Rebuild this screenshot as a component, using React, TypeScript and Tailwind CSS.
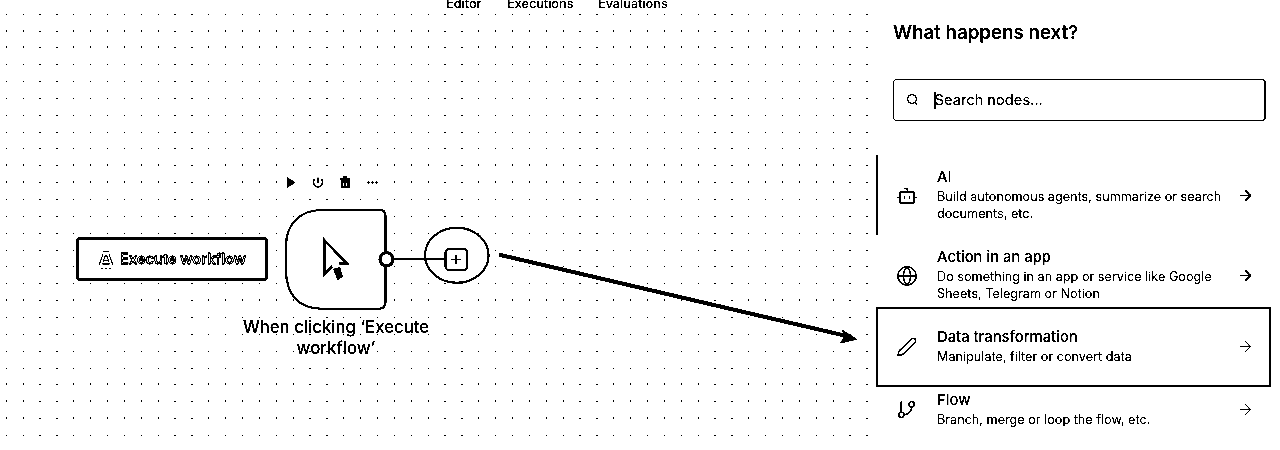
import { ArrowRight, GitBranch, Globe } from 'lucide-react';
import type { ReactNode } from 'react';

const TALL_ROWS = [1, 2, 9, 10, 17, 22, 23, 24];

function DotGrid() {
  const dots: ReactNode[] = [];
  for (let r = 0; r < 26; r++) {
    for (let c = 0; c < 52; c++) {
      const x = 6.4 + 16.875 * c;
      const y = Math.floor(14.15 + 16.85 * r);
      if (y === 182 && x > 282 && x < 382) continue;
      const wide = x % 1 < 0.2;
      const tall = !wide && TALL_ROWS.includes(r);
      dots.push(
        <rect
          key={`${r}-${c}`}
          x={Math.floor(x) - (wide ? 1 : 0)}
          y={y - (tall ? 1 : 0)}
          width={wide ? 2 : 1}
          height={tall ? 2 : 1}
        />,
      );
    }
  }
  return <g shapeRendering="crispEdges">{dots}</g>;
}

function Drawing() {
  return (
    <svg className="absolute inset-0" width="876" height="450" viewBox="0 0 876 450">
      <DotGrid />
      <g fill="white" stroke="black">
        <ellipse cx="456.800" cy="255.300" rx="31.800" ry="27.500" strokeWidth="2" />
        <path d="M322 210H380Q385.500 210 385.500 216V302Q385.500 308.700 379 308.700H322C298 308.700 286 294 286 270V246C286 224 300 210 322 210Z" strokeWidth="2" />
        <path d="M394 259H445" strokeWidth="2" />
        <circle cx="386.500" cy="259.300" r="6.500" strokeWidth="3" />
        <rect x="445.500" y="249" width="21.500" height="21" rx="3.500" strokeWidth="2" />
        <path d="M456 254.500V264M451.500 259.500H461" strokeWidth="1.300" />
      </g>
      {/* node toolbar */}
      <path d="M287 177L295.500 182.500L287 188Z" />
      <path d="M318 177.500V183M314.800 179A4.600 4.600 0 1 0 321.200 179" fill="none" stroke="black" strokeWidth="1.600" />
      <path d="M340 178H343V176.500H347V178H350V180H340ZM341 180H349.500V188H341Z" />
      <path d="M343.500 183V186M346.500 183V186" stroke="white" strokeWidth=".7" />
      <circle cx="368.500" cy="182.500" r="1.300" />
      <circle cx="372.500" cy="182.500" r="1.300" />
      <circle cx="376.500" cy="182.500" r="1.300" />
      {/* pointer */}
      <path d="M323 237L349.500 264.500L340 265L335 266.500L331 269L323 277Z" />
      <path d="M326 243.500L343.500 262L339 262.500L340 266L333 268L331.500 265L326 271Z" fill="white" />
      <path d="M333 269L340 267L343 277L337.500 280Z" />
      {/* connection hint */}
      <path d="M499 254.700L845 335.700" stroke="black" strokeWidth="3.800" />
      <path d="M857.500 339.500L840 343.500L844 336L841.500 329Z" />
    </svg>
  );
}

function Canvas() {
  return (
    <main className="relative h-[450px] w-[876px] shrink-0 overflow-hidden">
      <Drawing />
      <nav className="absolute -top-[5px] left-[446px] flex gap-[25px] text-[12.7px] leading-[18px] font-medium">
        <span className="w-9">Editor</span>
        <span className="w-[66px]">Executions</span>
        <span>Evaluations</span>
      </nav>
      <button className="absolute top-[237px] left-[76px] flex h-[44px] w-[192px] items-center justify-center gap-[6px] rounded-[4px] border-[3px] border-black bg-white pt-px text-[14.6px] font-semibold text-white">
        <svg width="16" height="20" viewBox="0 0 16 20" fill="none" stroke="black">
          <path d="M5.500 1.500H10.500M5 4L1 15.500M11 4L15 15.500M7.500 5L5 12M8.500 5L11 12M6 10.500H10" />
          <path d="M4.500 13.800H11.500" strokeWidth="2" />
          <path d="M3 18.500H5M7 18.500H9M11 18.500H13" />
        </svg>
        <span className="[-webkit-text-stroke:.85px_black]">Execute workflow</span>
      </button>
      <p className="absolute top-[317px] left-[226px] w-[220px] text-center text-[16.75px] leading-[21px] font-medium">
        When clicking ‘Execute
        <br />
        workflow’
      </p>
    </main>
  );
}

function SearchIcon() {
  return (
    <svg width="14" height="14" viewBox="0 0 14 14" fill="none" stroke="black" strokeWidth="1.2">
      <circle cx="6" cy="6" r="4.400" />
      <path d="M8.800 9L11.300 11.500" />
    </svg>
  );
}

function BotIcon() {
  return (
    <svg width="20" height="20" viewBox="0 0 20 20" fill="none" stroke="black" strokeWidth="1.6">
      <rect x="3" y="6" width="14" height="11" rx="1.500" />
      <path d="M7.500 2.500H10.500V6M.5 11.500H3M17 11.500H19.500" />
      <path d="M7.500 10.500V13M12.500 10.500V13" strokeWidth="1.300" />
    </svg>
  );
}

function PencilIcon() {
  return (
    <svg width="20" height="20" viewBox="0 0 20 20" fill="none" stroke="black" strokeWidth="1.3" strokeLinejoin="round">
      <path d="M1 18.500L2 14L14.500 1.800Q16.500 .7 18.200 2Q19 3.800 18 5.500L5.500 17.500Z" />
    </svg>
  );
}

interface ItemProps {
  icon: ReactNode;
  title: string;
  children: ReactNode;
  className: string;
  arrow: number;
}

function Item({ icon, title, children, className, arrow }: ItemProps) {
  return (
    <li className={`flex w-[395px] ${className}`}>
      <span className="flex w-[59px] shrink-0 items-center justify-center pt-0.5 pr-0.5">{icon}</span>
      <div className="w-[300px] shrink-0 self-center">
        <h2 className="mb-px text-[14.8px] leading-[20px] font-medium">{title}</h2>
        <p className="text-[12.67px] leading-[17px] whitespace-nowrap">{children}</p>
      </div>
      <span className="flex items-center pt-0.5"><ArrowRight size={17} strokeWidth={arrow} /></span>
    </li>
  );
}

function Panel() {
  return (
    <aside className="flex h-[450px] w-[404px] flex-col">
      <h1 className="mt-[19px] ml-[17px] text-[18.7px] leading-7 font-semibold">What happens next?</h1>
      <div className="mt-8 ml-[17px] flex h-[42px] w-[373px] items-center rounded-[4px] border border-r-2 border-black pl-3">
        <SearchIcon />
        <span className="ml-[14px] h-[17px] w-[1.5px] bg-black" />
        <span className="-ml-px text-[14.7px]">Search nodes...</span>
      </div>
      <ul className="mt-[34px]">
        <Item className="h-20 border-l-2 pb-px" icon={<BotIcon />} title="AI" arrow={1.9}>
          Build autonomous agents, summarize or search
          <br />
          documents, etc.
        </Item>
        <Item className="h-[72px] border-l-2 border-l-transparent pt-[7px]" icon={<Globe size={22} strokeWidth={1.7} />} title="Action in an app" arrow={1.9}>
          Do something in an app or service like Google
          <br />
          Sheets, Telegram or Notion
        </Item>
        <Item className="h-20 border-2 pb-[3px]" icon={<PencilIcon />} title="Data transformation" arrow={1.5}>
          Manipulate, filter or convert data
        </Item>
        <Item className="h-[46px] border-l-2 border-l-transparent pb-[3px]" icon={<GitBranch size={21} strokeWidth={1.7} />} title="Flow" arrow={1.5}>
          Branch, merge or loop the flow, etc.
        </Item>
      </ul>
    </aside>
  );
}

export default function App() {
  return (
    <div className="flex h-[450px] w-[1280px] overflow-hidden bg-white font-['Inter',sans-serif] text-black brightness-[.85] contrast-[20]">
      <Canvas />
      <Panel />
    </div>
  );
}
